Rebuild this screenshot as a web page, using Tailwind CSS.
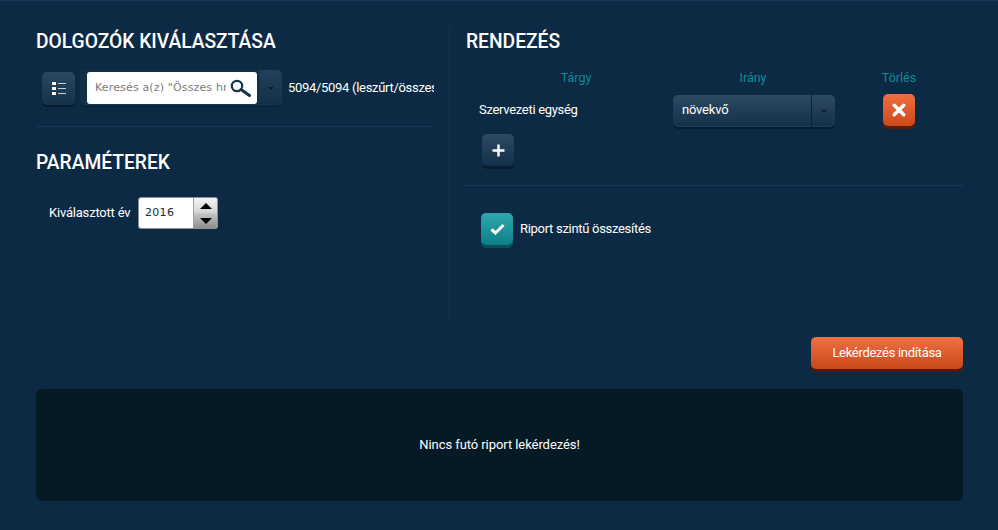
<!DOCTYPE html>
<html lang="en">
<head>
  <meta charset="UTF-8" />
  <title>Riport</title>
  <script src="https://cdn.jsdelivr.net/npm/@tailwindcss/browser@4"></script>
</head>
<body class="bg-[#0c2a43] h-[530px] w-[998px] overflow-hidden font-['Roboto',sans-serif] text-white border-t border-[#12385a]">
  <div class="pl-9 pr-[35px] pt-6">
    <div class="flex h-[297px]">
      <!-- left column -->
      <div class="w-[414px] border-r border-[#14344f] shrink-0">
        <div class="w-[398px]">
          <h2 class="text-[21px] leading-7 font-medium origin-left scale-x-[0.915] whitespace-nowrap h-7 mt-0.5">DOLGOZÓK KIVÁLASZTÁSA</h2>
          <div class="flex items-center mt-[15px] ml-1.5 h-9">
            <button class="w-[33px] h-[33px] rounded-[5px] bg-gradient-to-b from-[#2a4a62] to-[#15304a] shadow-[0_2px_0_#081c2e] flex items-center justify-center">
              <svg width="14" height="13" viewBox="0 0 14 13"><path d="M0 0h4v3H0zM0 5h4v3H0zM0 10h4v3H0z" fill="#fff"/><path d="M6 1h8v1H6zM6 6h8v1H6zM6 11h8v1H6z" fill="#c8d2da"/></svg>
            </button>
            <div class="flex ml-[5px] h-9 w-[202px] rounded-[5px] bg-[#143049] pl-[7px] shadow-[0_1px_0_#081c2e]">
              <div class="flex items-center w-[170px] h-8 mt-0.5 bg-white rounded-[3px] pl-2 pr-1 shrink-0">
                <span class="text-[#7b7b7b] text-[11px] tracking-[0.15px] leading-4 w-[131px] whitespace-nowrap font-['DejaVu_Sans',sans-serif] [clip-path:inset(0)]">Keresés a(z) "Összes hr</span>
                <svg class="ml-1" width="22" height="18" viewBox="0 0 22 18"><circle cx="7" cy="7" r="5.2" fill="none" stroke="#12344f" stroke-width="2.2"/><path d="M11 10.5l8.5 6" stroke="#12344f" stroke-width="3" stroke-linecap="round"/></svg>
              </div>
              <div class="flex-1 ml-0.5 flex items-center justify-center rounded-r-[5px] bg-gradient-to-b from-[#21405a] to-[#143049]">
                <span class="w-0 h-0 border-x-[3px] border-x-transparent border-t-[3px] border-t-[#0a1b2b]"></span>
              </div>
            </div>
            <span class="ml-1.5 text-[13px] tracking-[-0.3px] w-[146px] whitespace-nowrap [clip-path:inset(0)]">5094/5094 (leszűrt/összes)</span>
          </div>
          <div class="border-t border-[#143a58] mt-5"></div>
          <h2 class="text-[21px] leading-7 font-medium origin-left scale-x-[0.915] whitespace-nowrap mt-[21px]">PARAMÉTEREK</h2>
          <div class="flex items-center mt-[21px] ml-[13px]">
            <span class="text-[13px] tracking-[-0.2px] w-[89px]">Kiválasztott év</span>
            <div class="flex w-20 h-8 rounded-[3px] border border-[#8a9299] bg-white overflow-hidden">
              <span class="w-[54px] text-[#12293d] text-[11px] tracking-[0.3px] leading-[30px] pl-1.5 font-['DejaVu_Sans',sans-serif]">2016</span>
              <div class="flex-1 border-l border-[#9aa0a4] flex flex-col">
                <div class="h-[15px] bg-gradient-to-b from-[#f4f4f4] to-[#d4d4d4] flex items-center justify-center"><span class="w-0 h-0 border-x-[6px] border-x-transparent border-b-[6px] border-b-black"></span></div>
                <div class="flex-1 bg-gradient-to-b from-[#c8c8c8] to-[#8e8e8e] flex items-center justify-center"><span class="w-0 h-0 border-x-[6px] border-x-transparent border-t-[6px] border-t-black"></span></div>
              </div>
            </div>
          </div>
        </div>
      </div>
      <!-- right column -->
      <div class="flex-1 pl-[15px]">
        <h2 class="text-[21px] leading-7 font-medium origin-left scale-x-[0.915] whitespace-nowrap h-7 mt-0.5 ml-px">RENDEZÉS</h2>
        <div class="grid grid-cols-[209px_160px_130px] mt-[13px] text-[12.5px] text-[#0d8d96] text-center h-[22px] leading-[20px]">
          <span class="w-[222px]">Tárgy</span><span class="-ml-px w-[160px]">Irány</span><span class="ml-2.5 w-[110px]">Törlés</span>
        </div>
        <div class="flex items-center h-[36px] mt-0.5">
          <span class="ml-[14px] w-[194px] text-[13px] tracking-[-0.3px]">Szervezeti egység</span>
          <div class="flex self-start mt-[3px] w-[162px] h-8 rounded-[5px] bg-gradient-to-b from-[#2c4a61] to-[#15304a] shadow-[0_2px_0_#081c2e,inset_0_-1px_0_#17405f]">
            <span class="flex-1 pl-[9px] text-[13px] tracking-[-0.2px] leading-[30px]">növekvő</span>
            <span class="w-6 border-l border-[#0d2234] flex items-center justify-center"><span class="w-0 h-0 border-x-[3px] border-x-transparent border-t-[3px] border-t-[#0a1b2b]"></span></span>
          </div>
          <button class="ml-12 w-[32px] h-8 rounded-[5px] bg-gradient-to-b from-[#ee6e3f] to-[#cc4a18] shadow-[0_3px_0_#551c08] flex items-center justify-center">
            <svg width="14" height="14" viewBox="0 0 14 14"><path d="M2.3 2.3l9.4 9.4M11.7 2.3l-9.4 9.4" stroke="#fff" stroke-width="3.4" stroke-linecap="round"/></svg>
          </button>
        </div>
        <button class="ml-[17px] mt-[6px] w-[32px] h-8 rounded-[5px] bg-gradient-to-b from-[#2c4a61] to-[#15304a] shadow-[0_3px_0_#081c2e] flex items-center justify-center">
          <svg width="13" height="13" viewBox="0 0 13 13"><path d="M6.5 0.5v12M0.5 6.5h12" stroke="#fff" stroke-width="2.4"/></svg>
        </button>
        <div class="border-t border-[#143a58] mt-[19px] -ml-px"></div>
        <div class="flex items-center mt-[27px] ml-4">
          <span class="w-8 h-8 rounded-[5px] bg-gradient-to-b from-[#2ea8ae] to-[#0c7f88] shadow-[0_3px_0_#07505a] flex items-center justify-center">
            <svg width="15" height="12" viewBox="0 0 15 12"><path d="M1.5 6.5l4 3.5 8-8" fill="none" stroke="#fff" stroke-width="3"/></svg>
          </span>
          <span class="ml-[7px] text-[13px] tracking-[-0.3px]">Riport szintű összesítés</span>
        </div>
      </div>
    </div>
    <div class="flex justify-end mt-[15px]">
      <button class="w-[152px] h-8 rounded-[5px] bg-gradient-to-b from-[#ef7043] to-[#c9481a] shadow-[0_3px_0_#4f1c0c] text-[13px] tracking-[-0.3px]">Lekérdezés indítása</button>
    </div>
    <div class="mt-[20px] h-[112px] rounded-[6px] bg-[#061a26] flex items-center justify-center text-[13px] tracking-[-0.07px]">Nincs futó riport lekérdezés!</div>
  </div>
</body>
</html>
